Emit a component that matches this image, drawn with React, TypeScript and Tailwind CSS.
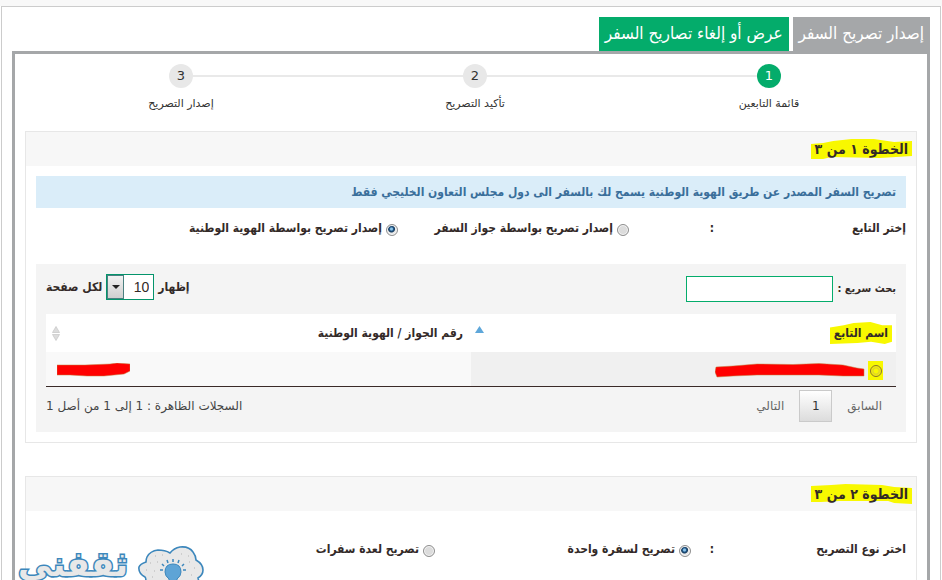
import type { ReactNode } from "react";

interface StepProps {
    number: number,
    label: string,
    active?: boolean,
    position: "first" | "middle" | "last"
}

const lineClasses = {
    first: "left-0 w-1/2",
    middle: "left-0 w-full",
    last: "right-0 w-1/2",
};

const Step = ({ number, label, active = false, position }: StepProps) => {
    return (
        <li className="relative flex flex-1 flex-col items-center">
            <span className={`absolute top-[11px] h-0.5 bg-[#e9e9e9] ${lineClasses[position]}`} />
            <span className={`relative flex size-6 items-center justify-center rounded-full text-[13px] ${active ? "bg-[#04ac6b] text-white" : "bg-[#e8e8e8] text-[#333]"}`}>
                {number}
            </span>
            <span className="mt-2 text-[11px] leading-4 text-[#333]">{label}</span>
        </li>
    );
}

const Marker = ({ path, children }: { path: string, children: ReactNode }) => {
    return (
        <span className="relative inline-block">
            <svg className="absolute -inset-x-1 -inset-y-0.5 h-[calc(100%+4px)] w-[calc(100%+8px)]" viewBox="0 0 100 20" preserveAspectRatio="none" aria-hidden="true">
                <path d={path} fill="#f8f800" />
            </svg>
            <span className="relative">{children}</span>
        </span>
    );
}

interface RadioProps {
    name: string,
    label: string,
    checked?: boolean,
    className?: string
}

const radioClasses = "size-3 shrink-0 appearance-none rounded-full border border-[#8f8f8f] bg-[#dcdcdc] shadow-[inset_0_0_0_1px_#f6f6f6] checked:bg-[radial-gradient(circle_at_45%_40%,#8cc4e8_0_1px,#245a8c_2px,#153a5c_3px,#e8e8e8_4px)]";

const Radio = ({ name, label, checked = false, className = "" }: RadioProps) => {
    return (
        <label className={`flex items-center gap-1 whitespace-nowrap ${className}`}>
            <input type="radio" name={name} defaultChecked={checked} className={`${radioClasses} mt-1`} />
            {label}
        </label>
    );
}

const Section = ({ title, marker, children }: { title: string, marker: string, children: ReactNode }) => {
    return (
        <section className="border border-[#e7e7e7]">
            <h2 className="flex h-[34px] items-center bg-[#f7f7f7] px-2 text-[14px] font-bold leading-4">
                <Marker path={marker}>{title}</Marker>
            </h2>
            <div className="p-2.5">{children}</div>
        </section>
    );
}

const DependentsTable = () => {
    return (
        <div className="mt-6 bg-[#f4f4f4] p-2.5">
            <div className="flex h-10 items-start justify-between text-[12px] font-bold">
                <label className="mt-0.5 flex items-center gap-1 text-[11px]">
                    بحث سريع :
                    <input type="text" className="h-[26px] w-[147px] border border-[#04ac6b] bg-white px-1 outline-none" />
                </label>
                <label className="flex items-center gap-1">
                    إظهار
                    <span className="relative">
                        <select defaultValue="10" className="block h-[26px] w-12 appearance-none border border-[#04946b] bg-white pr-1 pl-5 font-['Liberation_Sans'] text-[14px] font-normal outline-none">
                            <option>10</option>
                            <option>25</option>
                            <option>50</option>
                        </select>
                        <span className="pointer-events-none absolute inset-y-px left-px flex w-[17px] items-center justify-center border border-[#4a8080] bg-linear-to-b from-[#f2f2f2] to-[#cfcfcf]">
                            <svg width="8" height="4" viewBox="0 0 8 4" aria-hidden="true"><path d="M0 0h8L4 4z" fill="#222" /></svg>
                        </span>
                    </span>
                    لكل صفحة
                </label>
            </div>
            <table className="w-full table-fixed border-b border-[#3a2a28] text-[12px]">
                <thead>
                    <tr className="h-[38px] bg-white">
                        <th className="px-2 text-start font-bold">
                            <div className="flex items-center justify-between">
                                <Marker path="M0 5L22 3 38 1 65 0 84 3 100 3V18L88 20 66 18 44 19 0 20z">اسم التابع</Marker>
                                <svg className="-ml-1 mb-2" width="9" height="7" viewBox="0 0 9 7" aria-hidden="true"><path d="M4.500 0L9 7H0z" fill="#5ea7da" /></svg>
                            </div>
                        </th>
                        <th className="px-2 text-start font-bold">
                            <div className="flex items-center justify-between">
                                رقم الجواز / الهوية الوطنية
                                <svg className="-ml-0.5" width="8" height="15" viewBox="0 0 8 15" aria-hidden="true"><path d="M4 0.500L7.500 6.500H.5zM4 14.500L7.500 8.500H.5z" fill="#dcdcdc" stroke="#c4c4c4" strokeWidth=".7" /></svg>
                            </div>
                        </th>
                    </tr>
                </thead>
                <tbody>
                    <tr className="h-[34px]">
                        <td className="bg-[#f0f0f0] px-[13px] pt-1">
                            <div className="flex items-center gap-[3px]">
                                <span className="flex h-[19px] w-[15px] items-center justify-center bg-[#f8f800]">
                                    <input type="radio" name="dependent" aria-label="اسم التابع" className="size-3 appearance-none rounded-full border border-[#8a7430] bg-[radial-gradient(circle,#f8f800_0_2px,#dfd030_3px,#f8f800_5px)]" />
                                </span>
                                <svg width="150" height="15" viewBox="0 0 150 15" aria-hidden="true">
                                    <path d="M1 4L18 3 42 1 78 1.500 104 .5 128 2 142 5 149 6V13L128 13 104 12 42 12 18 13 2 14 0 9z" fill="#f00" stroke="#c08040" strokeWidth=".5" />
                                </svg>
                            </div>
                        </td>
                        <td className="bg-[#f9f9f9] px-[11px] pt-0.5">
                            <svg className="mr-auto" width="73" height="14" viewBox="0 0 73 14" aria-hidden="true">
                                <path d="M0 2L28 2 53 1 60 0 73 1V8L67 11 47 13 30 13 13 12 0 12z" fill="#f00" stroke="#c08040" strokeWidth=".5" />
                            </svg>
                        </td>
                    </tr>
                </tbody>
            </table>
            <div className="flex items-center justify-between pt-[3px] font-['DejaVu_Sans',sans-serif] text-[12px] text-[#444]">
                <nav className="flex items-center gap-[15px] px-3.5">
                    <button type="button" className="text-[#666]">السابق</button>
                    <button type="button" className="h-8 w-[33px] border border-[#cacaca] bg-linear-to-b from-white to-[#dcdcdc] text-[#333]">1</button>
                    <button type="button" className="text-[#666]">التالي</button>
                </nav>
                <p>السجلات الظاهرة : 1 إلى 1 من أصل 1</p>
            </div>
        </div>
    );
}

const Watermark = () => {
    return (
        <div className="absolute bottom-0 left-4 flex h-9 overflow-hidden" dir="ltr">
            <svg width="190" height="36" viewBox="0 0 190 36">
                <text x="57" y="32" textAnchor="middle" className="fill-[#e8e8e8] stroke-[#3c87bc] stroke-3 font-['DejaVu_Sans'] text-[34px] font-bold [paint-order:stroke]">ثقفني</text>
                <path d="M130 38q0-4-1-5-7-4-6-10 1-3 7-5 0-3 1-5 3-6 11-7 7 0 12 3 4-5 10-6 9-1 13 5 3 4 3 8 7 4 7 10 0 5-5 8l1 4z" fill="#e8e8e8" stroke="#3c87bc" strokeWidth="1.600" />
                <path d="M139 12h1M146 11h1M165 10h1M172 12h1M134 19h1M141 18h1M173 18h1M178 24h1M130 26h1M138 27h1M136 33h1M175 31h1" stroke="#b4b4b4" />
                <path d="M149 28q0-8 8-8t8 8q0 4-4 7v3h-8v-3q-4-3-4-7z" fill="#5ea4d6" stroke="#3c87bc" />
                <path d="M157 15v3M151 16l1 3M163 16l-1 3M146 20l2 2M168 20l-2 2M144 26l3 0M170 26l-3 0" fill="none" stroke="#3c87bc" strokeWidth="1.500" />
            </svg>
        </div>
    );
}

const App = () => {
    return (
        <div dir="rtl" className="relative flex h-screen flex-col overflow-hidden bg-white font-['DejaVu_Sans_Condensed','DejaVu_Sans',sans-serif] text-[#332a28]">
            <div className="h-1.5 shrink-0 bg-[#f8f8f8]" />
            <main className="mx-px flex-1 border-x border-t border-[#ccc] px-2.5 pt-2.5">
                <div className="flex gap-1 text-[17px] text-white">
                    <button type="button" className="h-[34px] bg-[#a5a7a9] px-1.5">إصدار تصريح السفر</button>
                    <button type="button" className="h-[34px] bg-[#04ac6b] px-1.5">عرض أو إلغاء تصاريح السفر</button>
                </div>
                <div className="border-[3px] border-[#a5a7a9] px-2.5 pt-2.5 pb-5">
                    <ol className="flex h-[67px] pr-px pl-[9px] font-['DejaVu_Sans',sans-serif]">
                        <Step number={1} label="قائمة التابعين" position="first" active />
                        <Step number={2} label="تأكيد التصريح" position="middle" />
                        <Step number={3} label="إصدار التصريح" position="last" />
                    </ol>
                    <Section title="الخطوة ١ من ٣" marker="M0 5L12 4 22 2 40 0 62 0 82 3 100 2V17L68 19 20 18 12 20 0 20z">
                        <p className="flex h-8 items-center bg-[#daedf9] px-2.5 text-[12px] font-bold text-[#3a6f9b]">
                            تصريح السفر المصدر عن طريق الهوية الوطنية يسمح لك بالسفر الى دول مجلس التعاون الخليجي فقط
                        </p>
                        <div className="mt-2 flex h-6 items-center text-[12px] font-bold" role="radiogroup" aria-label="إختر التابع">
                            <span className="w-48">إختر التابع</span>
                            <span className="w-[85px]">:</span>
                            <Radio name="document" label="إصدار تصريح بواسطة جواز السفر" className="w-[231px]" />
                            <Radio name="document" label="إصدار تصريح بواسطة الهوية الوطنية" checked />
                        </div>
                        <DependentsTable />
                    </Section>
                    <div className="h-[33px]" />
                    <Section title="الخطوة ٢ من ٣" marker="M0 2L20 1 34 0 70 1 82 3 100 4V20L82 19 76 17 28 17 10 18 0 18z">
                        <div className="mt-4 mb-6 flex h-6 items-center text-[12px] font-bold" role="radiogroup" aria-label="اختر نوع التصريح">
                            <span className="w-48">اختر نوع التصريح</span>
                            <span className="w-[23px]">:</span>
                            <Radio name="trips" label="تصريح لسفرة واحدة" checked className="w-64" />
                            <Radio name="trips" label="تصريح لعدة سفرات" />
                        </div>
                    </Section>
                </div>
            </main>
            <Watermark />
        </div>
    );
}

export default App;
